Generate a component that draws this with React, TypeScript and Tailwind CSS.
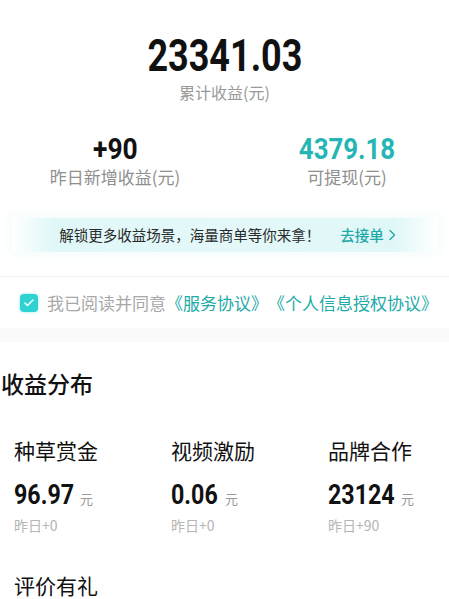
import { Check } from "lucide-react";

const cjk = "font-['Noto_Sans_CJK_SC',sans-serif]";
const num = "font-['Roboto',sans-serif] font-bold";

const sources = [
  { id: 1, title: "种草赏金", value: "96.97", width: "w-[58px]", today: "昨日+0" },
  { id: 2, title: "视频激励", value: "0.06", width: "w-[46px]", today: "昨日+0" },
  { id: 3, title: "品牌合作", value: "23124", width: "w-[65px]", today: "昨日+90" },
];

const App = () => {
  return (
    <div className={`w-[449px] h-[599px] overflow-hidden bg-white ${cjk}`}>
      {/* total */}
      <div className="pt-[31px] flex justify-center">
        <span className={`${num} inline-block origin-center scale-x-[0.8] text-[45px] leading-[50px] text-[#111]`}>
          23341.03
        </span>
      </div>
      <div className="text-center text-[16px] leading-[22px] text-[#9a9a9a]">累计收益(元)</div>

      {/* yesterday / withdrawable */}
      <div className="mt-[28px] grid grid-cols-[230px_1fr]">
        <div className="flex flex-col items-center">
          <span className={`${num} inline-block scale-x-[0.88] text-[30px] leading-[35px] text-[#111]`}>+90</span>
          <span className="text-[17px] leading-[22px] text-[#8f8f8f]">昨日新增收益(元)</span>
        </div>
        <div className="pl-[15px] flex flex-col items-center">
          <span className={`${num} inline-block scale-x-[0.86] text-[30px] leading-[35px] text-[#25b6b4]`}>4379.18</span>
          <span className="text-[17px] leading-[22px] text-[#8f8f8f]">可提现(元)</span>
        </div>
      </div>

      {/* banner */}
      <div className="mt-[30px] mx-[12px] h-[34px] flex items-center justify-center gap-[20px] bg-[linear-gradient(90deg,rgba(255,255,255,0),#e0f7f8_10%,#e4f8f9_50%,#e0f7f8_90%,rgba(255,255,255,0))] shadow-[0_0_10px_2px_rgba(230,248,249,0.5)]">
        <span className="text-[14.5px] text-[#2a2a2a] pl-[6px]">解锁更多收益场景，海量商单等你来拿！</span>
        <span className="flex items-center gap-[4px] text-[14.5px] font-medium text-[#1fa9a8]">
          去接单
          <svg width="8" height="12" viewBox="0 0 8 12" fill="none">
            <path d="M2 1.5 6.5 6 2 10.5" stroke="#1fa9a8" strokeWidth="1.4" strokeLinecap="round" strokeLinejoin="round" />
          </svg>
        </span>
      </div>

      <div className="mt-[24px] h-px bg-[#f4f4f4]" />

      {/* agreement */}
      <div className="mt-[11px] h-[30px] pl-[20px] flex items-center [text-spacing-trim:space-all]">
        <span className="w-[18px] h-[18px] rounded-[4px] bg-[#2fd2d2] flex items-center justify-center shadow-[0_0_3px_rgba(47,210,210,0.5)]">
          <Check size={12} strokeWidth={3} className="text-white" />
        </span>
        <span className="ml-[9px] text-[17px] leading-[22px] text-[#a8a8a8] whitespace-nowrap">我已阅读并同意</span>
        <span className="text-[17px] leading-[22px] text-[#22aaa8] whitespace-nowrap">《服务协议》《个人信息授权协议》</span>
      </div>

      <div className="mt-[10px] h-[14px] bg-[#fafafa]" />

      {/* distribution */}
      <div className="mt-[26px] pl-[1px] text-[23px] leading-[30px] font-medium text-[#111]">收益分布</div>

      <div className="mt-[38px] pl-[14px] grid grid-cols-[157px_157px_1fr]">
        {sources.map((s) => (
          <div key={s.id} className="flex flex-col">
            <span className="text-[21px] leading-[28px] text-[#111]">{s.title}</span>
            <div className="mt-[17px] flex items-baseline whitespace-nowrap">
              <span className={`${s.width} inline-block`}>
                <span className={`${num} inline-block origin-left scale-x-[0.83] text-[28px] leading-[28px] text-[#111]`}>
                  {s.value}
                </span>
              </span>
              <span className="ml-[8px] text-[13px] text-[#9a9a9a]">元</span>
            </div>
            <span className="mt-[6px] text-[14px] leading-[20px] text-[#b5b5b5]">{s.today}</span>
          </div>
        ))}
      </div>

      <div className="mt-[39px] pl-[14px] text-[21px] leading-[22px] text-[#111]">评价有礼</div>
    </div>
  );
};

export default App;
